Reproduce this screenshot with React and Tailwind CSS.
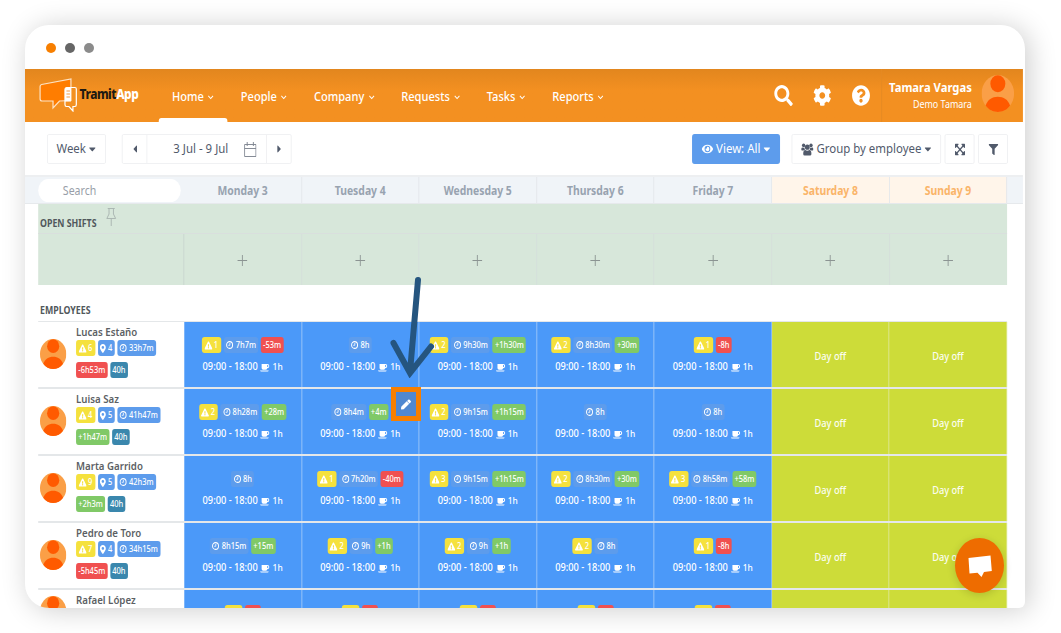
import React from 'react';
import {
  FaSearch,
  FaCog,
  FaQuestionCircle,
  FaEye,
  FaExpandArrowsAlt,
  FaFilter,
  FaExclamationTriangle,
  FaMapMarkerAlt,
  FaCaretDown,
  FaCaretLeft,
  FaCaretRight,
  FaPen,
} from 'react-icons/fa';

const NAV = ['Home', 'People', 'Company', 'Requests', 'Tasks', 'Reports'];

const DAYS = ['Monday 3', 'Tuesday 4', 'Wednesday 5', 'Thursday 6', 'Friday 7', 'Saturday 8', 'Sunday 9'];

// each day: [alerts, worked, balance]
const EMPLOYEES = [
  {
    name: 'Lucas Estaño', alerts: 6, places: 4, worked: '33h7m', balance: '-6h53m',
    days: [[1, '7h7m', '-53m'], [0, '8h'], [2, '9h30m', '+1h30m'], [2, '8h30m', '+30m'], [1, null, '-8h']],
  },
  {
    name: 'Luisa Saz', alerts: 4, places: 5, worked: '41h47m', balance: '+1h47m',
    days: [[2, '8h28m', '+28m'], [0, '8h4m', '+4m'], [2, '9h15m', '+1h15m'], [0, '8h'], [0, '8h']],
  },
  {
    name: 'Marta Garrido', alerts: 9, places: 5, worked: '42h3m', balance: '+2h3m',
    days: [[0, '8h'], [1, '7h20m', '-40m'], [3, '9h15m', '+1h15m'], [2, '8h30m', '+30m'], [3, '8h58m', '+58m']],
  },
  {
    name: 'Pedro de Toro', alerts: 7, places: 4, worked: '34h15m', balance: '-5h45m',
    days: [[0, '8h15m', '+15m'], [2, '9h', '+1h'], [2, '9h', '+1h'], [2, '8h'], [1, null, '-8h']],
  },
];

const Clock = () => (
  <svg viewBox="0 0 16 16" className="h-2 w-[9px]" fill="none" stroke="currentColor" strokeWidth="2.2">
    <circle cx="8" cy="8" r="6.8" />
    <path d="M8.6 4v4.6H5" strokeWidth="1.7" />
  </svg>
);

const Cup = () => (
  <svg viewBox="0 0 24 20" className="h-[9px] w-[11px]" fill="currentColor">
    <path fillRule="evenodd" d="M4 2H18.500C21.500 2 23.500 4 23.500 6.800S21.500 11.500 18.500 11.500H18Q17.500 15 14 15H8Q4 15 4 11ZM18 4.500V9H18.500Q21 9 21 6.800T18.500 4.500ZM0 16.500H22Q21.500 19 19 19H3Q0.500 19 0 16.500Z" />
  </svg>
);

const Group = () => (
  <svg viewBox="0 0 30 26" className="h-[13px] w-[14px]" fill="currentColor">
    <circle cx="6" cy="4" r="4" />
    <circle cx="24" cy="4" r="4" />
    <circle cx="15" cy="8" r="5.800" />
    <path d="M0 13Q0 8 3 8.500Q6 10 8 8.800Q8 11.500 9.500 13.500Q7 14 6 15H2Q0 15 0 13ZM30 13Q30 8 27 8.500Q24 10 22 8.800Q22 11.500 20.500 13.500Q23 14 24 15H28Q30 15 30 13Z" />
    <path d="M5 22.500Q5 14 10 14Q15 17.500 20 14Q25 14 25 22.500Q25 26 21.500 26H8.500Q5 26 5 22.500Z" />
  </svg>
);

const Avatar = ({ className }) => (
  <svg viewBox="0 0 40 40" className={className}>
    <circle cx="20" cy="20" r="20" fill="#fa9f47" />
    <circle cx="20" cy="9.5" r="9.2" fill="#ff5a00" />
    <path d="M5 33C7.500 26.500 13 23.500 20 23.500S32.500 26.500 35 33C31.500 37.500 26 40 20 40S8.500 37.500 5 33Z" fill="#ff5a00" />
  </svg>
);

const Logo = () => (
  <svg viewBox="0 0 38 34" preserveAspectRatio="none" className="h-[34px] w-[43px] shrink-0">
    <path d="M2.500 6.500L32 1V22.500L20.500 23L14 30V23H3Q1 23 1 21V8.500Q1 7 2.500 6.500Z" fill="#ff7d00" stroke="#fde3c5" strokeWidth="1.2" />
    <path d="M28 9.500H36Q37.400 9.500 37.400 11V26.500Q37.400 28.500 36 28.500H34V33L30 28.500H27.500Q26 28.500 26 26.500V12Q26 9.500 28 9.500Z" fill="none" stroke="#fff" strokeWidth="1.2" />
    <path d="M26 11.500Q26 9.500 28 9.500H32V23.500H26Z" fill="#fff" />
    <path d="M27.500 13H31M27.500 16H31M27.500 19H31" stroke="#f39c45" strokeWidth="1" />
  </svg>
);

const TONES = {
  alert: 'bg-[#f5e13d]',
  info: 'bg-[#5d9cec]',
  good: 'bg-[#80c967]',
  bad: 'bg-[#f05050]',
  total: 'bg-[#3a87ad]',
};

const Badge = ({ tone, icon, children }) => (
  <span className={`flex h-4 items-center gap-[2px] rounded-[3px] px-[2.5px] text-[8.5px] font-medium leading-none whitespace-nowrap text-white ${TONES[tone]}`}>
    {icon}
    {children}
  </span>
);

const balanceTone = (value) => (value[0] === '-' ? 'bad' : 'good');

const AlertBadge = ({ count }) => (
  <Badge tone="alert" icon={<FaExclamationTriangle className="h-[9px] w-[9px]" />}>
    <span className="pr-px">{count}</span>
  </Badge>
);

const Header = () => (
  <header className="flex h-[53px] items-center bg-linear-to-b from-[#e2861e] to-[#f39021] to-40% text-white">
    <div className="flex w-[136px] shrink-0 items-center gap-[3px] pb-[2px] pl-4">
      <Logo />
      <span className="text-[13.5px] font-extrabold tracking-[-0.55px] text-[#1e1a12]">
        Tramit<span className="text-white">App</span>
      </span>
    </div>
    <nav className="flex h-full pl-4">
      {NAV.map((item, i) => (
        <a key={item} className="relative flex h-full items-center gap-1 px-[15px] pt-[3px] text-[12.6px] font-medium">
          {item}
          <svg viewBox="0 0 8 6" className="h-[5px] w-2" fill="none" stroke="currentColor" strokeWidth="1.3">
            <path d="M0.800 1L4 4.300L7.200 1" />
          </svg>
          {i === 0 && <span className="absolute inset-x-0 bottom-0 h-1 rounded-t-[3px] bg-white" />}
        </a>
      ))}
    </nav>
    <div className="ml-auto flex items-center gap-[22px] pr-3 pb-px">
      <FaSearch className="h-[21px] w-[22px]" />
      <FaCog className="h-[21px] w-[22px]" />
      <FaQuestionCircle className="h-[21px] w-[22px]" />
    </div>
    <div className="flex h-full items-center border-l border-[#e58a24] pr-[10px]">
      <div className="w-[102px] pt-px text-right">
        <p className="text-[12.8px] leading-[17px] font-bold whitespace-nowrap">Tamara Vargas</p>
        <p className="text-[10.2px] leading-[17px]">Demo Tamara</p>
      </div>
      <Avatar className="mb-[4px] ml-[11px] h-[37px] w-[37px]" />
    </div>
  </header>
);

const BOX = 'flex h-[30px] items-center justify-center border border-[#eff0f2] rounded-[2px]';

const Toolbar = () => (
  <div className="flex h-[55px] items-center border-b-2 border-[#edeff1] pt-px pr-[17px] pl-[25px] text-[13px] text-[#515a6b]">
    <div className={`${BOX} w-[67px] gap-[3px]`}>
      Week <FaCaretDown className="h-3 w-[9px]" />
    </div>
    <div className="ml-[18px] flex h-[30px] w-[193px] rounded-[2px] border border-[#eff0f2]">
      <span className="flex w-[27px] items-center justify-center"><FaCaretLeft className="h-3 w-3" /></span>
      <span className="flex flex-1 items-center justify-end gap-[18px] border-x border-[#eff0f2] pr-[11px]">
        3 Jul - 9 Jul
        <svg viewBox="0 0 14 15" className="h-[15px] w-[14px]" fill="none" stroke="#7e8490">
          <path d="M0.500 2.500H13.500V14.500H0.500ZM0.500 6.500H13.500M3.500 0V4M10.500 0V4" />
        </svg>
      </span>
      <span className="flex w-[27px] items-center justify-center"><FaCaretRight className="h-3 w-3" /></span>
    </div>
    <div className="ml-auto flex h-[30px] w-[100px] items-center justify-center gap-[3px] rounded-[3px] bg-[#5d9cec] text-white">
      <FaEye className="h-3 w-[13px]" /> View: All <FaCaretDown className="h-3 w-2" />
    </div>
    <div className={`${BOX} ml-[13px] w-[170px] gap-[3px]`}>
      <Group /> Group by employee <FaCaretDown className="h-3 w-2" />
    </div>
    <div className={`${BOX} ml-1 w-[34px]`}><FaExpandArrowsAlt className="h-[13px] w-[13px]" /></div>
    <div className={`${BOX} ml-1 w-[34px]`}><FaFilter className="h-[11px] w-[11px]" /></div>
  </div>
);

const DayHeader = () => (
  <div className="flex h-[27px] border-b border-[#e6e9ec] bg-[#f0f4f8]">
    <div className="flex w-[181px] items-center pl-[15px]">
      <div className="h-[23px] w-[162px] rounded-full bg-white pl-7 text-[12px] leading-[23px] text-[#989ea8]">Search</div>
    </div>
    {DAYS.map((day, i) => (
      <div
        key={day}
        className={`flex w-[133.6px] items-center justify-center border-r border-[#e3e7eb] pt-px text-[11.8px] font-bold ${
          i > 4 ? 'bg-[#fff5ea] text-[#fab469]' : 'text-[#98a3b0]'
        }`}
      >
        {day}
      </div>
    ))}
  </div>
);

const SECTION_TITLE = 'text-[10px] leading-[14px] font-bold text-[#51585c]';

const OpenShifts = () => (
  <section className="mr-[18px] ml-[15px] h-[81px] bg-[#d7e7da]">
    <div className="flex h-[30px] border-b border-[#d9dfdd] pl-[2px]">
      <h2 className={`pt-3 ${SECTION_TITLE}`}>OPEN SHIFTS</h2>
      <svg viewBox="0 0 12 18" className="mt-1 ml-[11px] h-[18px] w-3" fill="none" stroke="#a9b4b0">
        <path d="M2 0.500H10M3.500 0.500V6L1 10.500H11L8.500 6V0.500M6 10.500V18" />
      </svg>
    </div>
    <div className="flex h-[51px] pl-[165px]">
      {DAYS.map((day, i) => (
        <div key={day} className={`flex w-[133.6px] items-center justify-center border-l pt-px ${i === 0 ? 'border-[#c8d5d0]' : 'border-[#d5dfdb]'}`}>
          <svg viewBox="0 0 12 12" className="h-[11px] w-3" stroke="#8b9492" strokeWidth="1.1">
            <path d="M6 0V12M0 6H12" />
          </svg>
        </div>
      ))}
    </div>
  </section>
);

const SHIFT_CELL = 'flex w-[133.6px] flex-col items-center border-r border-[#93c1f8] bg-[#4b99f9] pt-[15px]';

const Shift = ({ shift }) => {
  const [alerts, worked, balance] = shift;
  return (
    <div className={SHIFT_CELL}>
      <div className="flex gap-[3px]">
        {alerts > 0 && <AlertBadge count={alerts} />}
        {worked && <Badge tone="info" icon={<Clock />}>{worked}</Badge>}
        {balance && <Badge tone={balanceTone(balance)}>{balance}</Badge>}
      </div>
      <p className="mt-[6px] flex h-4 items-center gap-[3px] text-[10.5px] font-medium whitespace-nowrap text-white">
        09:00 - 18:00
        <Cup />
        <span className="text-[9.5px]">1h</span>
      </p>
    </div>
  );
};

const DAY_OFF = 'flex w-[133.6px] items-center justify-center border-r border-[#dde689] bg-[#cddc39] pt-1 text-[10.5px] font-medium text-[#fbfdf0]';

const NAME = 'h-[15px] text-[11px] leading-[15px] font-semibold text-[#5c5f64]';

const EmployeeRow = ({ employee }) => (
  <div className="mr-[18px] ml-[15px] flex h-[67px] border-b-2 border-[#e4e7e9]">
    <div className="flex w-[166px] shrink-0 items-center">
      <Avatar className="mb-px ml-[2px] h-[30px] w-[30px]" />
      <div className="ml-[11px] flex h-full flex-col pt-[2px]">
        <h3 className={NAME}>{employee.name}</h3>
        <div className="mt-px flex gap-[3px]">
          <AlertBadge count={employee.alerts} />
          <Badge tone="info" icon={<FaMapMarkerAlt className="h-[9px] w-[7px]" />}>{employee.places}</Badge>
          <Badge tone="info" icon={<Clock />}>{employee.worked}</Badge>
        </div>
        <div className="mt-[6px] flex gap-[3px]">
          <Badge tone={balanceTone(employee.balance)}>{employee.balance}</Badge>
          <Badge tone="total">40h</Badge>
        </div>
      </div>
    </div>
    {employee.days.map((shift, i) => (
      <Shift key={i} shift={shift} />
    ))}
    {[5, 6].map((i) => (
      <div key={i} className={DAY_OFF}>Day off</div>
    ))}
  </div>
);

// last row, only its top edge is above the fold
const PartialRow = ({ name }) => (
  <div className="mr-[18px] ml-[15px] flex h-[44px]">
    <div className="flex w-[166px] shrink-0">
      <Avatar className="mt-[6px] ml-[2px] h-[30px] w-[30px]" />
      <h3 className={`mt-[2px] ml-[11px] ${NAME}`}>{name}</h3>
    </div>
    {[0, 1, 2, 3, 4].map((i) => (
      <div key={i} className={SHIFT_CELL}>
        <div className="flex gap-[3px]">
          <span className="h-4 w-5 rounded-[3px] bg-[#f5e13d]" />
          <span className="h-4 w-[18px] rounded-[3px] bg-[#f05050]" />
        </div>
      </div>
    ))}
    {[5, 6].map((i) => (
      <div key={i} className={DAY_OFF} />
    ))}
  </div>
);

const App = () => {
  return (
    <div className="relative h-[633px] w-[1061px] overflow-hidden bg-white pt-[25px] pl-[25px] font-['Noto_Sans','Open_Sans',sans-serif]">
      <main className="flex h-[583px] w-[1000px] flex-col overflow-hidden rounded-[24px] rounded-br-[6px] bg-white shadow-[4px_2px_28px_rgba(0,0,0,0.2)]">
        <div className="flex h-11 shrink-0 items-center gap-[9px] pt-px pl-[21px]">
          <span className="h-[10px] w-[10px] rounded-full bg-[#f77f00]" />
          <span className="h-[10px] w-[10px] rounded-full bg-[#666]" />
          <span className="h-[10px] w-[10px] rounded-full bg-[#8b8b8b]" />
        </div>
        {/* the app itself is shown slightly condensed */}
        <div className="w-[1134px] origin-left scale-x-[0.88]">
          <Header />
          <Toolbar />
          <DayHeader />
          <OpenShifts />
          <div className={`mr-[18px] ml-[15px] h-[37px] border-b border-[#e4e7e9] pt-[18px] pl-[2px] ${SECTION_TITLE}`}>
            EMPLOYEES
          </div>
          {EMPLOYEES.map((employee) => (
            <EmployeeRow key={employee.name} employee={employee} />
          ))}
          <PartialRow name="Rafael López" />
        </div>
      </main>

      {/* Edit hint */}
      <div className="absolute top-[387px] left-[391px] flex h-[34px] w-[30px] items-center justify-center border-[5px] border-[#f77f00] bg-[#5088d0] text-white">
        <FaPen className="h-[11px] w-[10px]" />
      </div>
      <svg viewBox="0 0 50 106" className="absolute top-[272px] left-[388px] h-[106px] w-[50px]" fill="none" stroke="#25557f" strokeWidth="6" strokeLinecap="round">
        <path d="M30 8L22 100M5.500 71L22 101L43 74.500" />
      </svg>

      {/* Chat button */}
      <div className="absolute top-[538px] left-[955px] flex h-[55px] w-[49px] items-center justify-center rounded-[50%] bg-[#ee6c00] shadow-[0_2px_8px_rgba(0,0,0,0.15)]">
        <svg viewBox="0 0 24 22" className="h-[22px] w-6" fill="#fff">
          <path d="M0.500 3L22.500 0.500L23.800 16L16 17L13.500 22L9.500 17.800L1.500 18.500Z" />
        </svg>
      </div>
    </div>
  );
};

export default App;
